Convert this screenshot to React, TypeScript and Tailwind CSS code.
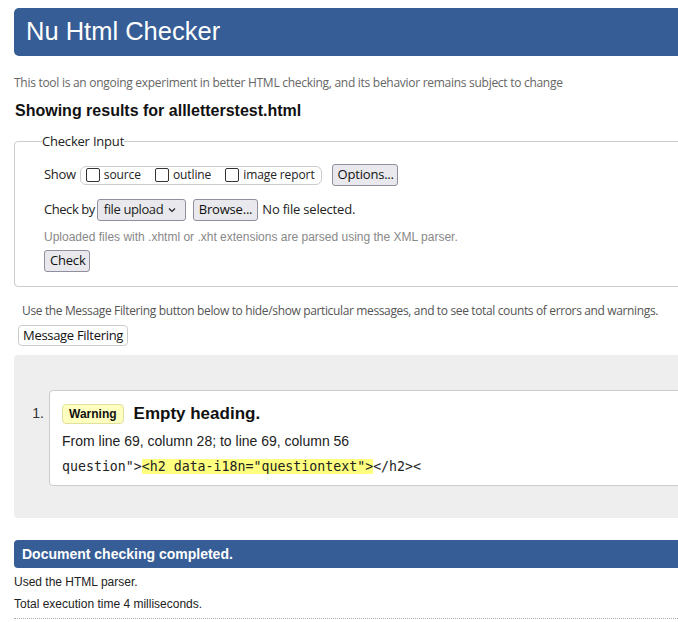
import React from 'react';

const ui = "font-['Segoe_UI','Open_Sans','Noto_Sans',sans-serif]";
const arial = "font-['Liberation_Sans',Arial,sans-serif]";

function Box({ label }: { label: string }) {
  return (
    <span className="flex items-center gap-[4px]">
      <span className="w-[14px] h-[14px] border border-[#333] rounded-[2px] bg-white" />
      <span className="text-[12px] text-[#222] tracking-[-0.1px]">{label}</span>
    </span>
  );
}

function Btn({ children, className = '' }: { children: React.ReactNode; className?: string }) {
  return (
    <span
      className={`inline-flex items-center h-[22px] px-[5px] border border-[#8f8f9d] rounded-[3px] bg-[#e9e9ed] text-[13px] text-[#111] tracking-[-0.2px] ${className}`}
    >
      {children}
    </span>
  );
}

export default function App() {
  return (
    <div className="w-full overflow-hidden bg-white min-h-[622px]">
      <div className={`w-[740px] pl-[14px] pt-[8px] ${arial} text-[#222]`}>
        {/* header */}
        <div className="h-[48px] bg-[#365d95] rounded-l-[5px] flex items-center pl-[12px]">
          <h1 className="text-[25.5px] text-white leading-none">Nu Html Checker</h1>
        </div>

        <p className={`${ui} text-[12px] text-[#666] mt-[19px] leading-[16px] tracking-[-0.28px]`}>
          This tool is an ongoing experiment in better HTML checking, and its behavior remains subject to change
        </p>
        <h2 className="text-[16px] font-bold text-[#111] mt-[10px] leading-[20px] pl-[1px]">
          Showing results for allletterstest.html
        </h2>

        {/* checker input */}
        <fieldset className={`${ui} mt-[14px] border border-[#ccc] rounded-l-[4px] pl-[29px] pt-[13px] pb-[14px] h-[152px]`}>
          <legend className="text-[13px] text-[#222] px-0 ml-[-2px] leading-none tracking-[-0.2px]">Checker Input</legend>
          <div className="flex items-center h-[22px] mt-[3px]">
            <span className="text-[13px] mr-[4px] tracking-[-0.3px]">Show</span>
            <div className="flex items-center gap-[14px] h-[19px] border border-[#ccc] rounded-[6px] pl-[5px] pr-[6px]">
              <Box label="source" />
              <Box label="outline" />
              <Box label="image report" />
            </div>
            <Btn className="ml-[10px] w-[66px]">Options...</Btn>
          </div>
          <div className="flex items-center h-[22px] mt-[13px]">
            <span className="text-[13px] mr-[2px] tracking-[-0.45px]">Check by</span>
            <span className="inline-flex items-center justify-between h-[22px] w-[89px] pl-[6px] pr-[9px] border border-[#8f8f9d] rounded-[3px] bg-[#e9e9ed] text-[13px] tracking-[-0.4px]">
              file upload
              <svg width="8" height="6" viewBox="0 0 8 6">
                <path d="M1 1.5 L4 4.5 L7 1.5" fill="none" stroke="#222" strokeWidth="1.2" />
              </svg>
            </span>
            <Btn className="ml-[7px]">Browse...</Btn>
            <span className="text-[13px] ml-[4px] tracking-[-0.2px]">No file selected.</span>
          </div>
          <p className={`${arial} text-[12px] text-[#888] mt-[8px] leading-[16px]`}>
            Uploaded files with .xhtml or .xht extensions are parsed using the XML parser.
          </p>
          <Btn className="mt-[5px] w-[46px]">Check</Btn>
        </fieldset>

        <p className={`${ui} text-[12px] text-[#555] mt-[16px] ml-[8px] leading-[16px] tracking-[-0.36px]`}>
          Use the Message Filtering button below to hide/show particular messages, and to see total counts of errors and warnings.
        </p>
        <div className="mt-[4px] ml-[4px]">
          <span className={`${ui} inline-flex items-center h-[21px] px-[4px] border border-[#ccc] rounded-[4px] bg-white text-[13px] text-[#111] tracking-[-0.3px]`}>
            Message Filtering
          </span>
        </div>

        {/* results */}
        <div className="mt-[8px] bg-[#eeeeee] rounded-l-[4px] h-[163px] pt-[35px] flex">
          <span className="w-[31px] text-right text-[14px] text-[#333] pt-[13px] pr-[1px]">1.</span>
          <div className="ml-[4px] flex-1 h-[96px] bg-white border border-[#ccc] rounded-l-[4px] pl-[12px] pt-[10px]">
            <div className="flex items-center">
              <span className="inline-flex items-center h-[20px] px-[6px] bg-[#ffffc0] border border-[#e0e0a0] rounded-[4px] text-[12px] font-bold text-[#111]">
                Warning
              </span>
              <span className="ml-[10px] text-[17px] font-bold text-[#111]">Empty heading.</span>
            </div>
            <p className="text-[14px] text-[#222] mt-[4px] leading-[20px]">
              From line 69, column 28; to line 69, column 56
            </p>
            <p className="font-['DejaVu_Sans_Mono',monospace] text-[13.25px] text-[#222] mt-[6px] leading-[20px]">
              question"&gt;<span className="bg-[#ffff80]">&lt;h2 data-i18n="questiontext"&gt;</span>&lt;/h2&gt;&lt;
            </p>
          </div>
        </div>

        <div className="mt-[22px] h-[28px] bg-[#365d95] rounded-l-[4px] flex items-center pl-[8px]">
          <span className="text-white font-bold text-[14px]">Document checking completed.</span>
        </div>
        <p className="text-[12px] text-[#222] mt-[6px] leading-[16px]">Used the HTML parser.</p>
        <p className="text-[12px] text-[#222] mt-[6px] leading-[16px]">Total execution time 4 milliseconds.</p>
        <div className="mt-[6px] border-t border-dotted border-[#aaa]" />
      </div>
    </div>
  );
}
